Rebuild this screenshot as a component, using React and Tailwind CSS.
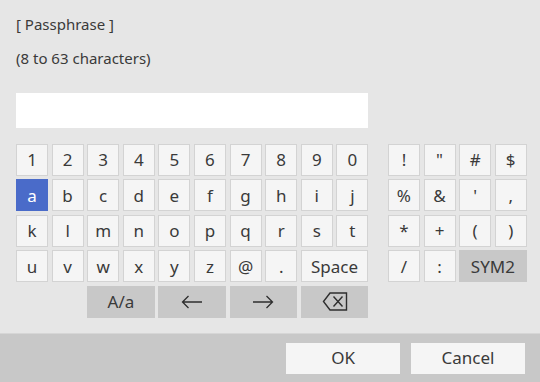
import React from 'react';

const font = { fontFamily: '"Noto Sans", "Open Sans", sans-serif' };

const leftRows = [
  ['1', '2', '3', '4', '5', '6', '7', '8', '9', '0'],
  ['a', 'b', 'c', 'd', 'e', 'f', 'g', 'h', 'i', 'j'],
  ['k', 'l', 'm', 'n', 'o', 'p', 'q', 'r', 's', 't'],
  ['u', 'v', 'w', 'x', 'y', 'z', '@', '.'],
];

const rightRows = [
  ['!', '"', '#', '$'],
  ['%', '&', "'", ','],
  ['*', '+', '(', ')'],
  ['/', ':'],
];

function Key({ children, active, dark, className = '' }) {
  let tone = 'bg-[#f5f5f5] border-[#d3d3d3] text-[#3a3a3a]';
  if (active) tone = 'bg-[#4a6bc9] border-[#4a6bc9] text-white';
  if (dark) tone = 'bg-[#c8c8c8] border-[#c8c8c8] text-[#3a3a3a]';
  return (
    <div className={`h-[32px] flex items-center justify-center border text-[17px] leading-none ${tone} ${className}`}>
      {children}
    </div>
  );
}

function ArrowLeft() {
  return (
    <svg width="22" height="14" viewBox="0 0 22 14" fill="none" stroke="#2e2e2e" strokeWidth="1.3">
      <path d="M21 7H1.5M7.5 1L1.5 7l6 6" />
    </svg>
  );
}

function ArrowRight() {
  return (
    <svg width="22" height="14" viewBox="0 0 22 14" fill="none" stroke="#2e2e2e" strokeWidth="1.3">
      <path d="M1 7h19.5M14.5 1l6 6-6 6" />
    </svg>
  );
}

function Backspace() {
  return (
    <svg width="26" height="19" viewBox="0 0 26 19" fill="none" stroke="#2e2e2e" strokeWidth="1.4">
      <path d="M8 1h16.5v17H8L1.5 9.5z" />
      <path d="M11.5 4.5l9 10M20.5 4.5l-9 10" />
    </svg>
  );
}

export default function App() {
  return (
    <div style={font} className="w-[540px] h-[382px] bg-[#e6e6e6] flex flex-col text-[#3a3a3a] overflow-hidden">
      <div className="flex-1 pl-[16px]">
        <p className="mt-[13.5px] text-[15px] leading-[20px]">[ Passphrase ]</p>
        <p className="mt-[14.4px] text-[15px] leading-[20px]">(8 to 63 characters)</p>
        <div className="mt-[25.1px] w-[352px] h-[35px] bg-white" />

        <div className="mt-[16px] flex gap-[19.6px]">
          <div className="grid grid-cols-[repeat(10,32px)] auto-rows-[32px] gap-x-[3.6px] gap-y-[3.5px]">
            {leftRows.map((row, r) =>
              row.map((k, i) => (
                <Key key={`${r}-${i}`} active={k === 'a'}>{k}</Key>
              ))
            )}
            <Key className="col-span-2">Space</Key>
            <Key dark className="col-start-3 col-span-2">A/a</Key>
            <Key dark className="col-span-2"><ArrowLeft /></Key>
            <Key dark className="col-span-2"><ArrowRight /></Key>
            <Key dark className="col-span-2"><Backspace /></Key>
          </div>

          <div className="grid grid-cols-[repeat(4,32px)] auto-rows-[32px] gap-x-[3.6px] gap-y-[3.5px] content-start">
            {rightRows.map((row, r) =>
              row.map((k, i) => <Key key={`${r}-${i}`}>{k}</Key>)
            )}
            <Key dark className="col-span-2">SYM2</Key>
          </div>
        </div>
      </div>

      <div className="h-[49px] bg-[#c8c8c8] border-t border-[#d6d6d6] flex items-center justify-end gap-[10.5px] pr-[14.7px]">
        <button className="w-[114px] h-[31px] bg-[#f5f5f5] text-[17px] text-[#3a3a3a]">OK</button>
        <button className="w-[114.6px] h-[31px] bg-[#f5f5f5] text-[17px] text-[#3a3a3a]">Cancel</button>
      </div>
    </div>
  );
}
